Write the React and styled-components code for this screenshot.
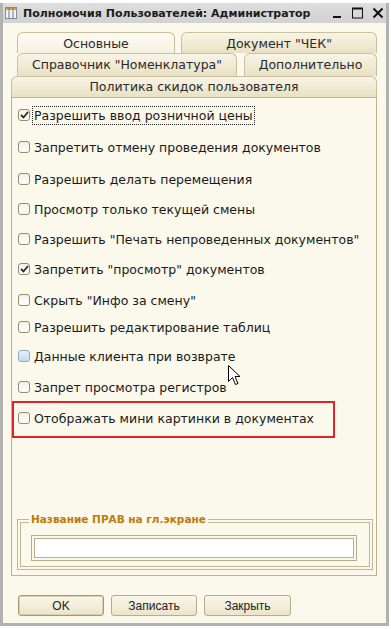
import styled, { createGlobalStyle } from "styled-components";

const GlobalStyle = createGlobalStyle`
  body {
    margin: 0;
    background: #ffffff;
    font-family: "DejaVu Sans", Tahoma, sans-serif;
  }
`;

const rights = [
  { text: "Разрешить ввод розничной цены", checked: true, focus: true, mt: 8 },
  { text: "Запретить отмену проведения документов", mt: 14 },
  { text: "Разрешить делать перемещения", mt: 14 },
  { text: "Просмотр только текущей смены", mt: 12 },
  { text: "Разрешить \"Печать непроведенных документов\"", mt: 12 },
  { text: "Запретить \"просмотр\" документов", checked: true, mt: 12 },
  { text: "Скрыть \"Инфо за смену\"", mt: 13 },
  { text: "Разрешить редактирование таблиц", mt: 9 },
  { text: "Данные клиента при возврате", hover: true, mt: 11 },
  { text: "Запрет просмотра регистров", mt: 13 },
];

const Window = styled.div`
  position: relative;
  margin-top: 3px;
  width: 383px;
  height: 620px;
  border: 3px solid #b2b2b2;
  border-top: none;
  background: #fbf8ec;
  display: flex;
  flex-direction: column;
`;

const TitleBar = styled.div`
  height: 20px;
  background: linear-gradient(#dedede, #d2d2d2);
  display: flex;
  align-items: center;
  padding: 0 2px 0 2px;
`;

const TitleText = styled.span`
  flex: 1;
  margin-left: 6px;
  font-size: 11px;
  font-weight: bold;
  color: #1c1c1c;
`;

const TitleButtons = styled.div`
  display: flex;
  align-items: center;
  gap: 8px;
`;

const Content = styled.div`
  flex: 1;
  display: flex;
  flex-direction: column;
  padding: 9px 9px 6px 8px;
`;

const TabRow = styled.div`
  display: flex;
  gap: ${(p) => p.gap || 0}px;
  height: ${(p) => p.h}px;
  padding: 0 0 0 ${(p) => p.inset || 0}px;
`;

const Tab = styled.div`
  width: ${(p) => (p.w ? p.w + "px" : "auto")};
  flex: ${(p) => (p.w ? "none" : 1)};
  border: 1px solid #cbc09e;
  border-bottom: none;
  border-radius: 6px 6px 0 0;
  background: ${(p) =>
    p.active
      ? "linear-gradient(#fcfaf1, #f6f2e2)"
      : "linear-gradient(#f8f5e6, #e8e1c4)"};
  display: flex;
  justify-content: center;
  padding-top: ${(p) => p.pt || 3}px;
  font-size: 12.5px;
  color: #2a2a2a;
  box-sizing: border-box;
`;

const Panel = styled.div`
  flex: none;
  height: 479px;
  border: 1px solid #bdb292;
  display: flex;
  flex-direction: column;
  box-sizing: border-box;
`;

const Row = styled.label`
  display: flex;
  align-items: center;
  height: 18px;
  margin-top: ${(p) => p.mt}px;
  padding-left: ${(p) => (p.boxed ? 4 : 6)}px;
  font-size: 12.5px;
  color: #1a1a1a;
`;

const Box = styled.span`
  width: 12px;
  height: 12px;
  box-sizing: border-box;
  border: 1px solid ${(p) => (p.hover ? "#8ea6c8" : "#948c70")};
  border-radius: 3px;
  background: ${(p) =>
    p.hover ? "linear-gradient(#e6eefb, #c9daf3)" : "linear-gradient(#f2f0e8, #ffffff)"};
  display: flex;
  align-items: center;
  justify-content: center;
  margin-right: 2px;
`;

const Caption = styled.span`
  padding: 0 1px;
  height: 17px;
  line-height: 17px;
  border: 1px dotted ${(p) => (p.focus ? "#222" : "transparent")};
`;

const Marked = styled.div`
  margin-top: 5px;
  width: 323px;
  box-sizing: border-box;
  border: 2px solid #e2232b;
  padding: 6px 0 9px;
  display: flex;
`;

const Spacer = styled.div`
  flex: 1;
`;

const Group = styled.div`
  margin: 0 3px 5px 5px;
  height: 51px;
  box-sizing: border-box;
  border: 1px solid #c2b793;
  box-shadow: inset 0 0 0 2px #fbf8ec, inset 0 0 0 3px #c2b793;
  display: flex;
  flex-direction: column;
  padding: 0 15px 0 13px;
`;

const Legend = styled.span`
  align-self: flex-start;
  margin: -8px 0 0 -2px;
  padding: 0 2px;
  background: #fbf8ec;
  font-size: 10.5px;
  font-weight: bold;
  color: #c07b06;
  line-height: 15px;
`;

const Input = styled.div`
  margin-top: 8px;
  height: 26px;
  border: 1px solid #b8ad8c;
  box-shadow: inset 0 0 0 2px #fbf8ec, inset 0 0 0 3px #b8ad8c;
  background: #ffffff;
  box-sizing: border-box;
`;

const Footer = styled.div`
  margin-top: 19px;
  display: flex;
  gap: 7px;
  padding-left: 7px;
`;

const Button = styled.button`
  width: ${(p) => p.w}px;
  height: 21px;
  border: 1px solid ${(p) => (p.main ? "#a39a76" : "#b6ad8c")};
  box-shadow: ${(p) => (p.main ? "inset 0 0 0 1px #d9d0ae" : "none")};
  border-radius: 3px;
  background: linear-gradient(#faf7ea, #ebe4ca);
  font-family: "Liberation Sans", Arial, sans-serif;
  font-size: 12px;
  color: #222;
  padding: 0;
`;

const Cursor = styled.svg`
  position: absolute;
  left: 225px;
  top: 362px;
`;

const Check = () => (
  <svg width="9" height="8" viewBox="0 0 9 8">
    <path d="M1 4 L3.5 6.5 L8 1" fill="none" stroke="#2b2b2b" strokeWidth="1.8" />
  </svg>
);

const Checkbox = ({ item, boxed }) => (
  <Row mt={item.mt} boxed={boxed}>
    <Box hover={item.hover}>{item.checked && <Check />}</Box>
    <Caption focus={item.focus}>{item.text}</Caption>
  </Row>
);

const App = () => {
  return (
    <>
      <GlobalStyle />
      <Window>
        <TitleBar>
          <svg width="12" height="12" viewBox="0 0 12 12">
            <rect x="0.5" y="0.5" width="11" height="11" fill="#f4f4f4" stroke="#7d8aa0" />
            <rect x="1" y="1" width="10" height="2" fill="#e0a020" />
            <path d="M4 1 V11 M8 1 V11" stroke="#6a7890" />
          </svg>
          <TitleText>Полномочия Пользователей: Администратор</TitleText>
          <TitleButtons>
            <svg width="12" height="12" viewBox="0 0 12 12">
              <rect x="2" y="9" width="8" height="2" fill="#111" />
            </svg>
            <svg width="13" height="12" viewBox="0 0 13 12">
              <rect x="1.5" y="1" width="10" height="10" fill="none" stroke="#111" />
              <rect x="1.5" y="1" width="10" height="1.5" fill="#111" />
            </svg>
            <svg width="12" height="12" viewBox="0 0 12 12">
              <path d="M1.5 1.5 L10.5 10.5 M10.5 1.5 L1.5 10.5" stroke="#111" strokeWidth="2" />
            </svg>
          </TitleButtons>
        </TitleBar>
        <Content>
          <TabRow h={21} gap={6} inset={6}>
            <Tab w={158} active>Основные</Tab>
            <Tab>Документ "ЧЕК"</Tab>
          </TabRow>
          <TabRow h={23} gap={7} inset={6}>
            <Tab w={220}>Справочник "Номенклатура"</Tab>
            <Tab>Дополнительно</Tab>
          </TabRow>
          <TabRow h={21}>
            <Tab pt={2}>Политика скидок пользователя</Tab>
          </TabRow>
          <Panel>
            {rights.map((item) => (
              <Checkbox key={item.text} item={item} />
            ))}
            <Marked>
              <Checkbox boxed item={{ text: "Отображать мини картинки в документах", mt: 0 }} />
            </Marked>
            <Spacer />
            <Group>
              <Legend>Название ПРАВ на гл.экране</Legend>
              <Input />
            </Group>
          </Panel>
          <Footer>
            <Button w={86} main>OK</Button>
            <Button w={86}>Записать</Button>
            <Button w={87}>Закрыть</Button>
          </Footer>
        </Content>
        <Cursor width="13" height="21" viewBox="0 0 13 21">
          <path
            d="M0.5 0.5 L0.5 16.5 L4.5 12.5 L7.5 19.5 L10 18.5 L7 11.5 L12 11.5 Z"
            fill="#fff"
            stroke="#000"
          />
        </Cursor>
      </Window>
    </>
  );
};

export default App;
